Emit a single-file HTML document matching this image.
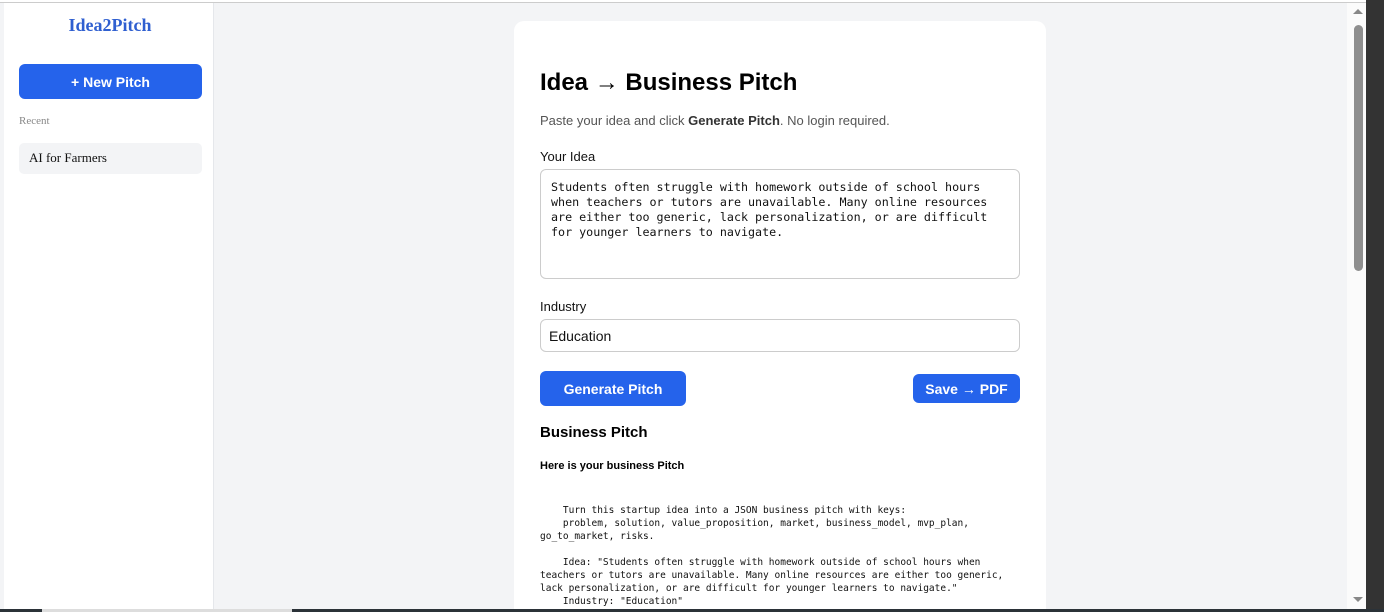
<!DOCTYPE html>
<html style="width:1384px;height:612px;overflow:hidden"><head><style>
*{box-sizing:border-box;margin:0;padding:0}
body{width:1384px;height:612px;overflow:hidden;background:#f3f4f6;position:relative;font-family:"Liberation Sans",sans-serif}
.abs{position:absolute}
.sb{left:4px;top:3px;width:210px;height:606px;background:#fff;border-right:1px solid #e5e7eb}
.card{left:514px;top:21px;width:532px;height:588px;background:#fff;border-radius:10px 10px 0 0}
.btn{background:#2563eb;color:#fff;font-weight:bold;border-radius:6px;display:flex;align-items:center;justify-content:center}
pre{font-family:"DejaVu Sans Mono","Liberation Mono",monospace;font-size:9.5px;line-height:13px;color:#111}
</style></head><body>
<div class="abs" style="left:0;top:0;width:1384px;height:3px;background:#fff;border-bottom:1px solid #ccc"></div>
<div class="abs sb"></div>
<div class="abs" style="left:5px;top:15px;width:210px;text-align:center;font-family:'Liberation Serif',serif;font-weight:bold;font-size:18px;color:#2f5fd0">Idea2Pitch</div>
<div class="abs btn" style="left:19px;top:64px;width:183px;height:35px;font-size:14px">+ New Pitch</div>
<div class="abs" style="left:19px;top:115px;font-family:'Liberation Serif',serif;font-size:11px;color:#888">Recent</div>
<div class="abs" style="left:19px;top:143px;width:183px;height:31px;background:#f3f4f6;border-radius:5px;font-family:'Liberation Serif',serif;font-size:13px;padding:7px 10px;color:#111">AI for Farmers</div>
<div class="abs card"></div>
<div class="abs" style="left:540px;top:69px;font-size:24px;font-weight:bold;color:#000">Idea → Business Pitch</div>
<div class="abs" style="left:540px;top:113px;font-size:13px;color:#555">Paste your idea and click <b style="color:#333">Generate Pitch</b>. No login required.</div>
<div class="abs" style="left:540px;top:149px;font-size:13px;color:#111">Your Idea</div>
<div class="abs" style="left:540px;top:169px;width:480px;height:110px;border:1px solid #ccc;border-radius:6px;padding:10px"><pre style="font-size:11.7px;line-height:15px">Students often struggle with homework outside of school hours
when teachers or tutors are unavailable. Many online resources
are either too generic, lack personalization, or are difficult
for younger learners to navigate.</pre></div>
<div class="abs" style="left:540px;top:299px;font-size:13px;color:#111">Industry</div>
<div class="abs" style="left:540px;top:319px;width:480px;height:33px;border:1px solid #ccc;border-radius:6px;padding:8px 8px;font-size:14px;color:#111">Education</div>
<div class="abs btn" style="left:540px;top:371px;width:146px;height:35px;font-size:14px">Generate Pitch</div>
<div class="abs btn" style="left:913px;top:374px;width:107px;height:29px;font-size:14px">Save → PDF</div>
<div class="abs" style="left:540px;top:424px;font-size:15px;font-weight:bold;color:#000">Business Pitch</div>
<div class="abs" style="left:540px;top:460px;font-size:11px;font-weight:bold;color:#000">Here is your business Pitch</div>
<pre class="abs" style="left:540px;top:504px">    Turn this startup idea into a JSON business pitch with keys:
    problem, solution, value_proposition, market, business_model, mvp_plan,
go_to_market, risks.

    Idea: "Students often struggle with homework outside of school hours when
teachers or tutors are unavailable. Many online resources are either too generic,
lack personalization, or are difficult for younger learners to navigate."
    Industry: "Education"</pre>
<div class="abs" style="left:1347px;top:3px;width:19px;height:606px;background:#fbfbfb"></div>
<div class="abs" style="left:1354px;top:25px;width:9px;height:246px;background:#8f8f8f;border-radius:5px"></div>
<div class="abs" style="left:1353px;top:9px;width:0;height:0;border-left:5px solid transparent;border-right:5px solid transparent;border-bottom:5px solid #888"></div>
<div class="abs" style="left:1353px;top:597px;width:0;height:0;border-left:5px solid transparent;border-right:5px solid transparent;border-top:5px solid #888"></div>
<div class="abs" style="left:1366px;top:0;width:18px;height:612px;background:#333"></div>
<div class="abs" style="left:0;top:609px;width:1384px;height:3px;background:#2b3238"></div>
<div class="abs" style="left:42px;top:609px;width:250px;height:3px;background:#ddd"></div>
</body></html>
